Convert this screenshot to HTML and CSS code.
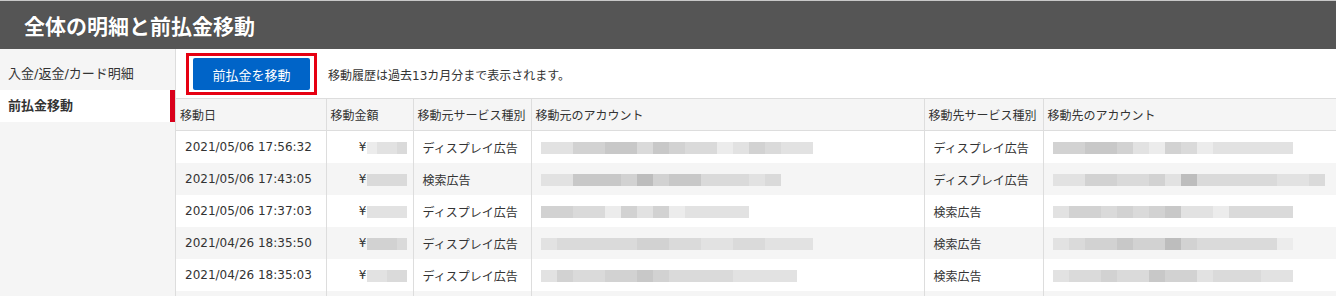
FILE: index.html
```html
<!DOCTYPE html>
<html lang="ja">
<head>
    <meta charset="UTF-8">
    <title>全体の明細と前払金移動</title>
    <link rel="stylesheet" href="styles.css">
</head>
<body>
    <div class="page-header">
        <h1>全体の明細と前払金移動</h1>
    </div>
    <div class="layout">
        <!-- Side Menu -->
        <ul class="side-menu">
            <li>入金/返金/カード明細</li>
            <li class="active">前払金移動</li>
        </ul>

        <!-- Main -->
        <div class="main">
            <div class="toolbar">
                <div class="button-frame">
                    <button type="button" class="button">前払金を移動</button>
                </div>
                <p class="note">移動履歴は過去13カ月分まで表示されます。</p>
            </div>

            <table class="history-table">
                <colgroup>
                    <col style="width: 150px">
                    <col style="width: 87px">
                    <col style="width: 118px">
                    <col style="width: 393px">
                    <col style="width: 119px">
                    <col>
                </colgroup>
                <thead>
                    <tr>
                        <th>移動日</th>
                        <th>移動金額</th>
                        <th>移動元サービス種別</th>
                        <th>移動元のアカウント</th>
                        <th>移動先サービス種別</th>
                        <th>移動先のアカウント</th>
                    </tr>
                </thead>
                <tbody id="historyBody"></tbody>
            </table>
        </div>
    </div>

    <script>
        // Account names and amounts are blurred in the statement, so draw them as mosaic blocks
        var records = [
            { date: '2021/05/06 17:56:32', amount: '0112', from: 'ディスプレイ広告', fromAcc: '11334424322013211', to: 'ディスプレイ広告', toAcc: '334431032011111' },
            { date: '2021/05/06 17:43:05', amount: '2222', from: '検索広告', fromAcc: '114443534422212', to: 'ディスプレイ広告', toAcc: '11332231522222112' },
            { date: '2021/05/06 17:37:03', amount: '1111', from: 'ディスプレイ広告', fromAcc: '3322031301111', to: '検索広告', toAcc: '133232341102222' },
            { date: '2021/04/26 18:35:50', amount: '3332', from: 'ディスプレイ広告', fromAcc: '12222233221122111', to: '検索広告', toAcc: '123343353222220' },
            { date: '2021/04/26 18:35:03', amount: '1122', from: 'ディスプレイ広告', fromAcc: '1322334322221111', to: '検索広告', toAcc: '122322433122211' }
        ];

        function mosaic(shades, cls) {
            var html = '<span class="' + cls + '">';
            shades.split('').forEach(function(s) {
                html += '<i class="shade' + s + '"></i>';
            });
            return html + '</span>';
        }

        var body = document.getElementById('historyBody');
        records.forEach(function(r) {
            var tr = document.createElement('tr');
            tr.innerHTML =
                '<td>' + r.date + '</td>' +
                '<td class="amount">¥' + mosaic(r.amount, 'mosaic small') + '</td>' +
                '<td>' + r.from + '</td>' +
                '<td>' + mosaic(r.fromAcc, 'mosaic') + '</td>' +
                '<td>' + r.to + '</td>' +
                '<td>' + mosaic(r.toAcc, 'mosaic') + '</td>';
            body.appendChild(tr);
        });

        // Next row only peeks in at the bottom edge of the view
        var more = document.createElement('tr');
        more.innerHTML = '<td></td><td></td><td></td><td></td><td></td><td></td>';
        body.appendChild(more);
    </script>
</body>
</html>
```

FILE: styles.css
```css
body {
    font-family: "DejaVu Sans", "Noto Sans CJK JP", sans-serif;
    font-size: 12px;
    color: #333;
    margin: 0;
    padding: 0;
    background-color: #fff;
}

/* Page Header */
.page-header {
    height: 48px;
    background-color: #555;
    border-top: 1px solid #c8c8c8;
    display: flex;
    align-items: center;
    padding-left: 24px;
}
.page-header h1 {
    margin: 0;
    font-family: "Noto Sans CJK JP", sans-serif;
    font-size: 21px;
    font-weight: bold;
    color: #fff;
    text-shadow: 0 0 1px rgba(0, 0, 0, 0.4);
}

.layout {
    display: flex;
}

/* Side Menu */
.side-menu {
    list-style: none;
    margin: 0;
    padding: 9px 0 0;
    width: 175px;
    flex-shrink: 0;
    background-color: #f5f5f5;
    border-right: 1px solid #ddd;
    min-height: 250px;
    font-size: 13px;
}
.side-menu li {
    height: 32px;
    line-height: 32px;
    padding-left: 8px;
}
.side-menu li.active {
    background-color: #fff;
    font-weight: bold;
    border-right: 5px solid #d9001b;
}

/* Main */
.main {
    flex: 1;
    min-width: 0;
}
.toolbar {
    display: flex;
    align-items: center;
    gap: 11px;
    padding: 4px 0 3px 10px;
}
.button-frame {
    border: 3px solid #e60012;
    padding: 2px 4px;
}
.button {
    display: block;
    width: 117px;
    height: 32px;
    background-color: #0064c8;
    color: #fff;
    font-family: "Noto Sans CJK JP", sans-serif;
    font-size: 13px;
    border: none;
    border-radius: 2px;
    cursor: pointer;
}
.note {
    margin: 0;
}

/* History Table */
.history-table {
    width: 100%;
    table-layout: fixed;
    border-collapse: collapse;
}
.history-table th,
.history-table td {
    height: 32px;
    padding: 0 0 0 9px;
    border-left: 1px solid #ddd;
    text-align: left;
    white-space: nowrap;
    overflow: hidden;
}
.history-table th {
    height: 31px;
    background-color: #f5f5f5;
    font-weight: normal;
    padding-left: 4px;
    border-top: 1px solid #ddd;
    border-bottom: 1px solid #ddd;
}
.history-table th:first-child,
.history-table td:first-child {
    border-left: none;
}
.history-table tbody tr:nth-child(even) {
    background-color: #f5f5f5;
}
.history-table td.amount {
    text-align: right;
    padding-right: 6px;
}

/* Blurred blocks */
.mosaic {
    display: inline-flex;
    vertical-align: middle;
    height: 12px;
}
.mosaic i {
    width: 16px;
    height: 12px;
}
.mosaic.small i {
    width: 10px;
}
.shade0 { background-color: #ececec; }
.shade1 { background-color: #e2e2e2; }
.shade2 { background-color: #dadada; }
.shade3 { background-color: #d2d2d2; }
.shade4 { background-color: #c8c8c8; }
.shade5 { background-color: #bdbdbd; }
```
